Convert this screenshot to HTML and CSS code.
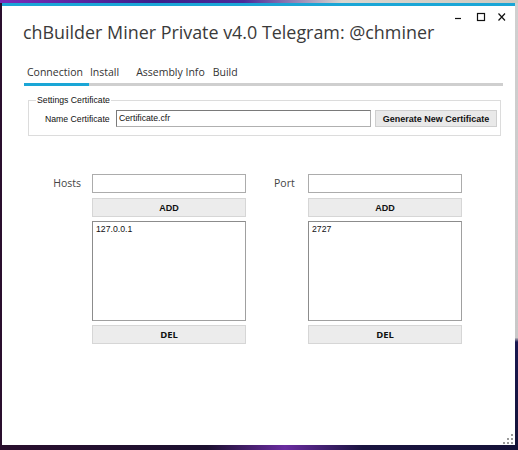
FILE: index.html
```html
<!DOCTYPE html>
<html>
<head>
<meta charset="utf-8">
<link rel="stylesheet" href="styles.css">
</head>
<body>
<div class="window">
  <svg class="controls" width="52" height="10" viewBox="0 0 52 10">
    <line x1="1" y1="6.5" x2="7" y2="6.5" stroke="#111" stroke-width="1.2"/>
    <rect x="23.5" y="1.5" width="7" height="7" fill="none" stroke="#111" stroke-width="1.2"/>
    <path d="M44.5 1.5 L51 8.5 M51 1.5 L44.5 8.5" stroke="#111" stroke-width="1.2" fill="none"/>
  </svg>
  <h1 class="title">chBuilder Miner Private v4.0 Telegram: @chminer</h1>
  <div class="tabs">
    <span class="tab tab-conn">Connection</span>
    <span class="tab tab-install">Install</span>
    <span class="tab tab-asm">Assembly Info</span>
    <span class="tab tab-build">Build</span>
  </div>
  <div class="tabline"><div class="tabline-active"></div></div>
  <fieldset class="group">
    <legend class="group-title">Settings Certificate</legend>
    <div class="cert-row">
      <span class="cert-label">Name Certificate</span>
      <div class="textbox cert-box">Certificate.cfr</div>
      <button class="btn gen">Generate New Certificate</button>
    </div>
  </fieldset>
  <div class="lists">
    <div class="col col-hosts">
      <div class="label label-hosts">Hosts</div>
      <div class="stack">
        <div class="textbox entry"></div>
        <button class="btn add">ADD</button>
        <div class="listbox">127.0.0.1</div>
        <button class="btn del">DEL</button>
      </div>
    </div>
    <div class="col col-port">
      <div class="label label-port">Port</div>
      <div class="stack">
        <div class="textbox entry"></div>
        <button class="btn add">ADD</button>
        <div class="listbox">2727</div>
        <button class="btn del">DEL</button>
      </div>
    </div>
  </div>
  <svg class="grip" width="10" height="12" viewBox="0 0 10 12">
    <rect x="8" y="1" width="2" height="2" fill="#9a9a9a"/>
    <rect x="4" y="5" width="2" height="2" fill="#9a9a9a"/>
    <rect x="8" y="5" width="2" height="2" fill="#9a9a9a"/>
    <rect x="0" y="9" width="2" height="2" fill="#9a9a9a"/>
    <rect x="4" y="9" width="2" height="2" fill="#9a9a9a"/>
    <rect x="8" y="9" width="2" height="2" fill="#9a9a9a"/>
  </svg>
</div>
</body>
</html>
```

FILE: styles.css
```css
html, body {
  margin: 0;
  padding: 0;
}
body {
  width: 518px;
  height: 450px;
  overflow: hidden;
  background:
    linear-gradient(to right, #7a2cb8 0%, #3a1f8a 30%, #4a2a9a 47%, #d9d6cf 66%, #cfcac0 100%) top left / 518px 3px no-repeat,
    linear-gradient(to bottom, #d0d0d0 0%, #c8c8c8 75%, #1a1850 76%, #141236 100%) right top / 3px 450px no-repeat,
    linear-gradient(to right, #2a0f2e 0%, #1c1030 40%, #6a2ca0 55%, #1a1440 70%, #151238 100%);
  font-family: "Liberation Sans", Arial, sans-serif;
}
.window {
  position: relative;
  box-sizing: border-box;
  margin: 3px 0 0 2px;
  width: 513px;
  height: 442px;
  background: #ffffff;
  border-top: 3px solid #1aa6d6;
}
.controls {
  position: absolute;
  left: 452px;
  top: 6px;
}
.title {
  margin: 14px 0 0 21px;
  font-family: "Open Sans", sans-serif;
  font-weight: 400;
  font-size: 17.9px;
  line-height: 24px;
  color: #3a3a3a;
  white-space: nowrap;
}
.tabs {
  display: flex;
  margin: 21px 0 0 0;
  font-family: "Open Sans", sans-serif;
  font-size: 10.5px;
  line-height: 14px;
  color: #333;
  white-space: nowrap;
}
.tab-conn { margin-left: 25px; }
.tab-install { margin-left: 7px; }
.tab-asm { margin-left: 17px; }
.tab-build { margin-left: 8px; }
.tabline {
  margin: 4px 0 0 22px;
  width: 479px;
  height: 3px;
  background: #cfcfcf;
}
.tabline-active {
  width: 65px;
  height: 3px;
  background: #1aa6d6;
}
.group {
  margin: 9px 0 0 26px;
  width: 473px;
  box-sizing: border-box;
  padding: 5px 3px 8px 16px;
  border: 1px solid #dcdcdc;
  min-width: 0;
}
.group-title {
  padding: 0 1px;
  font-size: 8.7px;
  line-height: 10px;
  color: #111;
  margin-left: -9px;
}
.cert-row {
  display: flex;
  align-items: center;
  height: 17px;
}
.cert-label {
  font-size: 8.7px;
  color: #111;
  width: 71px;
  white-space: nowrap;
}
.textbox {
  box-sizing: border-box;
  background: #fff;
  border: 1px solid #8a8a8a;
  font-size: 8.7px;
  color: #111;
}
.cert-box {
  width: 255px;
  height: 17px;
  line-height: 15px;
  padding-left: 2px;
  border-color: #7a7a7a #b0b0b0 #b0b0b0 #7a7a7a;
}
.btn {
  box-sizing: border-box;
  margin: 0;
  padding: 0;
  background: #ececec;
  border: 1px solid #d6d6d6;
  font-family: "Liberation Sans", Arial, sans-serif;
  font-weight: bold;
  font-size: 9px;
  color: #111;
  cursor: default;
}
.gen {
  margin-left: 4px;
  width: 122px;
  height: 17px;
  background: #e9e9e9;
  border-color: #cfcfcf;
}
.lists {
  display: flex;
  margin-top: 38px;
}
.col {
  display: flex;
  align-items: flex-start;
}
.label {
  font-family: "Open Sans", sans-serif;
  font-size: 10.5px;
  line-height: 19px;
  color: #444;
}
.label-hosts {
  width: 79px;
  margin-right: 11px;
  text-align: right;
}
.col-port {
  margin-left: 28px;
}
.label-port {
  width: 34px;
}
.stack {
  display: flex;
  flex-direction: column;
  width: 154px;
}
.entry {
  height: 19px;
  border-color: #acacac;
}
.add {
  margin-top: 5px;
  height: 19px;
}
.listbox {
  box-sizing: border-box;
  margin-top: 4px;
  height: 100px;
  border: 1px solid #8c8c8c;
  border-right-color: #a0a0a0;
  border-bottom-color: #a0a0a0;
  padding: 2px 3px;
  font-size: 8.7px;
  line-height: 10px;
  color: #111;
}
.del {
  margin-top: 4px;
  height: 19px;
  font-family: "Open Sans", sans-serif;
  font-size: 9.5px;
}
.grip {
  position: absolute;
  right: 2px;
  bottom: 0;
}
```
